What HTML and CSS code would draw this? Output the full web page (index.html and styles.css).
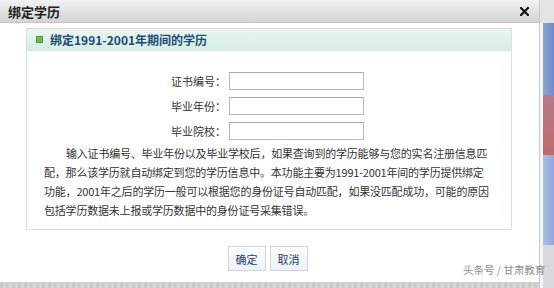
FILE: index.html
```html
<!DOCTYPE html>
<html lang="zh">
<head>
<meta charset="utf-8">
<title>绑定学历</title>
<link rel="stylesheet" href="styles.css">
</head>
<body>
<div class="page">
  <div class="dialog">
    <div class="titlebar">
      <span class="title">绑定学历</span>
      <svg class="close" width="9" height="9" viewBox="0 0 9 9"><path d="M1 1L8 8M8 1L1 8" stroke="#111" stroke-width="2.2" stroke-linecap="square"/></svg>
    </div>
    <div class="content">
      <div class="box">
        <div class="box-head"><i class="sq"></i><span>绑定1991-2001年期间的学历</span></div>
        <div class="form">
          <label>证书编号：</label><input type="text">
          <label>毕业年份：</label><input type="text">
          <label>毕业院校：</label><input type="text">
        </div>
        <p class="note"><span class="ln ind">输入证书编号、毕业年份以及毕业学校后，如果查询到的学历能够与您的实名注册信息匹</span><span class="ln">配，那么该学历就自动绑定到您的学历信息中。本功能主要为1991-2001年间的学历提供绑定</span><span class="ln">功能，2001年之后的学历一般可以根据您的身份证号自动匹配，如果没匹配成功，可能的原因</span><span class="ln">包括学历数据未上报或学历数据中的身份证号采集错误。</span></p>
      </div>
      <div class="buttons">
        <button class="btn">确定</button>
        <button class="btn">取消</button>
      </div>
    </div>
    <div class="footer"></div>
  </div>
  <div class="side">
    <div class="side-top"></div>
    <div class="side-main">
      <div class="side-edge"></div>
      <div class="side-col">
        <div class="s-blue1"></div>
        <div class="s-red"></div>
        <div class="s-blue2"></div>
        <div class="s-gray"></div>
      </div>
    </div>
  </div>
  <span class="wm">头条号 / 甘肃教育</span>
</div>
</body>
</html>
```
FILE: styles.css
```css
* { box-sizing: border-box; }
html, body { margin: 0; padding: 0; }
body {
  width: 554px;
  height: 288px;
  overflow: hidden;
  background: #fff;
  font-family: "Noto Sans CJK SC", "Noto Sans", sans-serif;
  color: #333;
}
.page {
  position: relative;
  display: flex;
  width: 554px;
  height: 288px;
}
.dialog {
  width: 540px;
  height: 288px;
  display: flex;
  flex-direction: column;
  border-right: 1px solid #c9c9c9;
  background: #fff;
}
.titlebar {
  height: 23px;
  display: flex;
  align-items: center;
  justify-content: space-between;
  padding: 0 10px 0 8px;
  background: linear-gradient(#f2f2f2, #d4d4d4);
  border-bottom: 1px solid #c4c4c4;
}
.title {
  font-size: 13px;
  font-weight: bold;
  color: #222;
}
.close {
  display: block;
}
.content {
  flex: 1;
  padding: 5px 0 0 26px;
}
.box {
  width: 486px;
  height: 202px;
  border: 1px solid #d6e4dc;
  border-top-color: #c9e2d3;
}
.box-head {
  height: 22px;
  display: flex;
  align-items: center;
  gap: 7px;
  padding-left: 9px;
  background: linear-gradient(#e9f6ef, #d7eee2);
  border-bottom: 1px solid #d2e8db;
  font-size: 12px;
  font-weight: bold;
  color: #1d4a7a;
}
.sq {
  width: 7px;
  height: 7px;
  background: #6cbf4e;
  border: 1px solid #4f9d36;
}
.form {
  display: grid;
  grid-template-columns: 199px 135px;
  column-gap: 3px;
  row-gap: 7px;
  margin-top: 21px;
}
.form label {
  font-size: 11px;
  color: #333;
  text-align: right;
  line-height: 18px;
}
.form input {
  width: 135px;
  height: 18px;
  margin: 0;
  border: 1px solid #b9b9b9;
  border-top-color: #a8a8a8;
  background: #fff;
  padding: 0 2px;
}
.note {
  margin: 4px 0 0 17px;
  font-size: 11px;
  line-height: 19px;
  color: #333;
  letter-spacing: -0.2px;
}
.ln { display: block; white-space: nowrap; }
.ind { text-indent: 22px; }
.buttons {
  display: flex;
  justify-content: center;
  gap: 4px;
  margin-top: 16px;
  padding-right: 30px;
}
.btn {
  width: 38px;
  height: 25px;
  margin: 0;
  padding: 0;
  border: 1px solid #cfd6dd;
  background: linear-gradient(#fbfcfe, #eef2f7);
  font-family: "Noto Sans CJK SC", sans-serif;
  font-size: 11px;
  color: #1d3f66;
}
.footer {
  height: 6px;
  background: repeating-linear-gradient(90deg, #cacaca 0 3px, #d6d6d6 3px 6px);
  border-top: 1px solid #d0d0d0;
}
.side {
  width: 14px;
  height: 288px;
  display: flex;
  flex-direction: column;
}
.side-top {
  height: 23px;
  background: #e4e4e4;
}
.side-main {
  flex: 1;
  display: flex;
}
.side-edge {
  width: 3px;
  background: #f3f4f8;
}
.side-col {
  flex: 1;
  display: flex;
  flex-direction: column;
}
.s-blue1 { height: 72px; background: linear-gradient(90deg, #8aa3d6, #6d8dc9); }
.s-red { height: 60px; background: linear-gradient(#b97a8c, #c06a6a); }
.s-blue2 { height: 90px; background: linear-gradient(90deg, #a9bde6, #8ea8dc); }
.s-gray { flex: 1; background: #d7d9de; }
.wm {
  position: absolute;
  left: 463px;
  top: 262px;
  font-size: 10.5px;
  color: #8a8e94;
  white-space: nowrap;
}
```
